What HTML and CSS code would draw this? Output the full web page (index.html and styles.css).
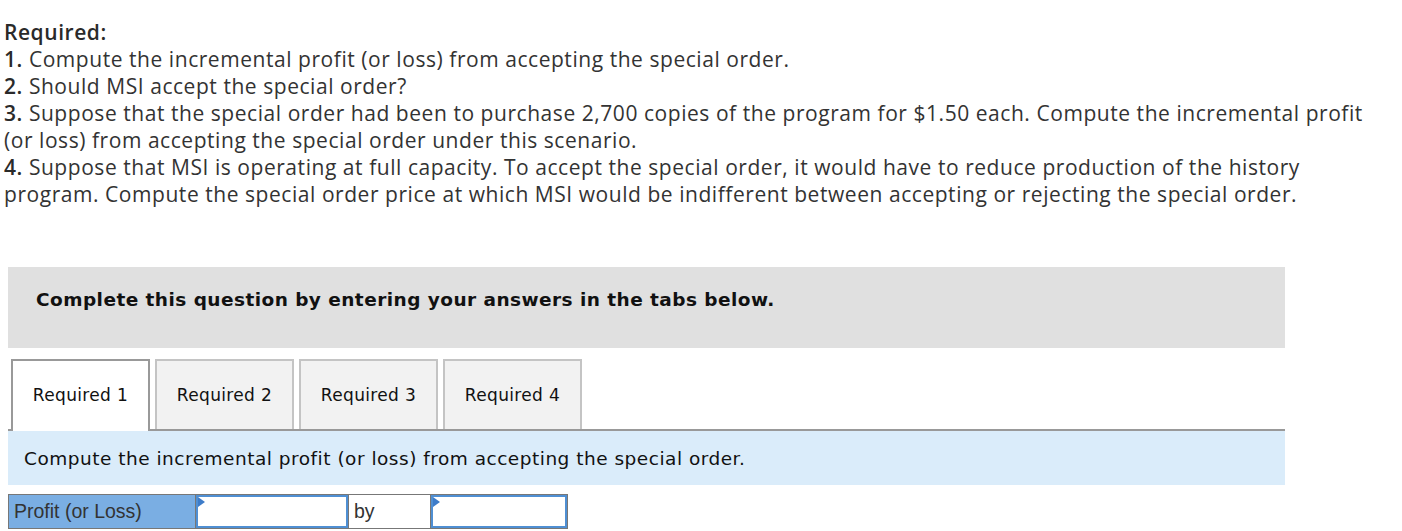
FILE: index.html
```html
<!DOCTYPE html>
<html>
<head>
<meta charset="utf-8">
<link rel="stylesheet" href="styles.css">
</head>
<body>
<div class="question">
  <p class="line"><b>Required:</b></p>
  <p class="line"><b>1.</b> Compute the incremental profit (or loss) from accepting the special order.</p>
  <p class="line"><b>2.</b> Should MSI accept the special order?</p>
  <p class="line"><b>3.</b> Suppose that the special order had been to purchase 2,700 copies of the program for $1.50 each. Compute the incremental profit (or loss) from accepting the special order under this scenario.</p>
  <p class="line"><b>4.</b> Suppose that MSI is operating at full capacity. To accept the special order, it would have to reduce production of the history program. Compute the special order price at which MSI would be indifferent between accepting or rejecting the special order.</p>
</div>

<div class="instructions">Complete this question by entering your answers in the tabs below.</div>

<div class="tabs">
  <div class="tab active">Required 1</div>
  <div class="tab">Required 2</div>
  <div class="tab">Required 3</div>
  <div class="tab">Required 4</div>
</div>

<div class="prompt">Compute the incremental profit (or loss) from accepting the special order.</div>

<div class="answer-row">
  <div class="cell label">Profit (or Loss)</div>
  <div class="cell input wide"><span class="marker"></span></div>
  <div class="cell by">by</div>
  <div class="cell input"><span class="marker"></span></div>
</div>
</body>
</html>
```

FILE: styles.css
```css
html, body {
  margin: 0;
  padding: 0;
  background: #fff;
}
body {
  width: 1402px;
  color: #222;
}
.question {
  padding: 19px 0 0 4px;
  width: 1384px;
  box-sizing: border-box;
  font-family: "Open Sans", "Liberation Sans", sans-serif;
  font-size: 21px;
  letter-spacing: 0.55px;
  line-height: 27px;
  color: #333;
}
.line {
  margin: 0;
}
.line b {
  font-weight: 600;
  color: #2a2a2a;
}
.instructions {
  margin: 59px 0 0 8px;
  width: 1277px;
  height: 81px;
  box-sizing: border-box;
  background: #e0e0e0;
  padding: 22px 0 0 28px;
  font-family: "DejaVu Sans", Verdana, sans-serif;
  font-weight: bold;
  font-size: 18.5px;
  letter-spacing: 0.45px;
  color: #111;
}
.tabs {
  margin: 11px 0 0 8px;
  width: 1277px;
  display: flex;
  gap: 5px;
  padding-left: 3px;
  box-sizing: border-box;
  border-bottom: 2px solid #999;
  height: 72px;
}
.tab {
  width: 139px;
  height: 70px;
  box-sizing: border-box;
  border: 2px solid #c4c4c4;
  border-bottom: none;
  background: #f2f2f2;
  display: flex;
  align-items: center;
  justify-content: center;
  font-family: "DejaVu Sans", Tahoma, sans-serif;
  font-size: 17px;
  letter-spacing: 0.35px;
  color: #111;
  padding-bottom: 1px;
}
.tab.active {
  background: #fff;
  border-color: #999;
  height: 72px;
  margin-bottom: -2px;
  padding-bottom: 3px;
}
.prompt {
  margin: 0 0 0 8px;
  width: 1277px;
  height: 54px;
  box-sizing: border-box;
  background: #daecfa;
  padding: 17px 0 0 16px;
  font-family: "DejaVu Sans", Tahoma, sans-serif;
  font-size: 18.5px;
  letter-spacing: 0.5px;
  color: #111;
}
.answer-row {
  margin: 9px 0 0 8px;
  display: flex;
  height: 35px;
}
.cell {
  box-sizing: border-box;
  border: 1px solid #777;
  height: 35px;
  font-family: "Liberation Sans", Arial, sans-serif;
  font-size: 19.5px;
  color: #333;
  display: flex;
  align-items: center;
  padding-left: 5px;
  margin-left: -1px;
}
.cell:first-child {
  margin-left: 0;
}
.label {
  width: 188px;
  background: #7aaee3;
}
.input {
  width: 138px;
  background: #fff;
  position: relative;
  box-shadow: inset 0 0 0 2px #4f8fd3;
}
.input.wide {
  width: 154px;
}
.by {
  width: 83px;
  background: #fff;
}
.marker {
  position: absolute;
  left: 2px;
  top: 2px;
  width: 0;
  height: 0;
  border-top: 5px solid transparent;
  border-bottom: 5px solid transparent;
  border-left: 7px solid #3d7cc9;
}
```
